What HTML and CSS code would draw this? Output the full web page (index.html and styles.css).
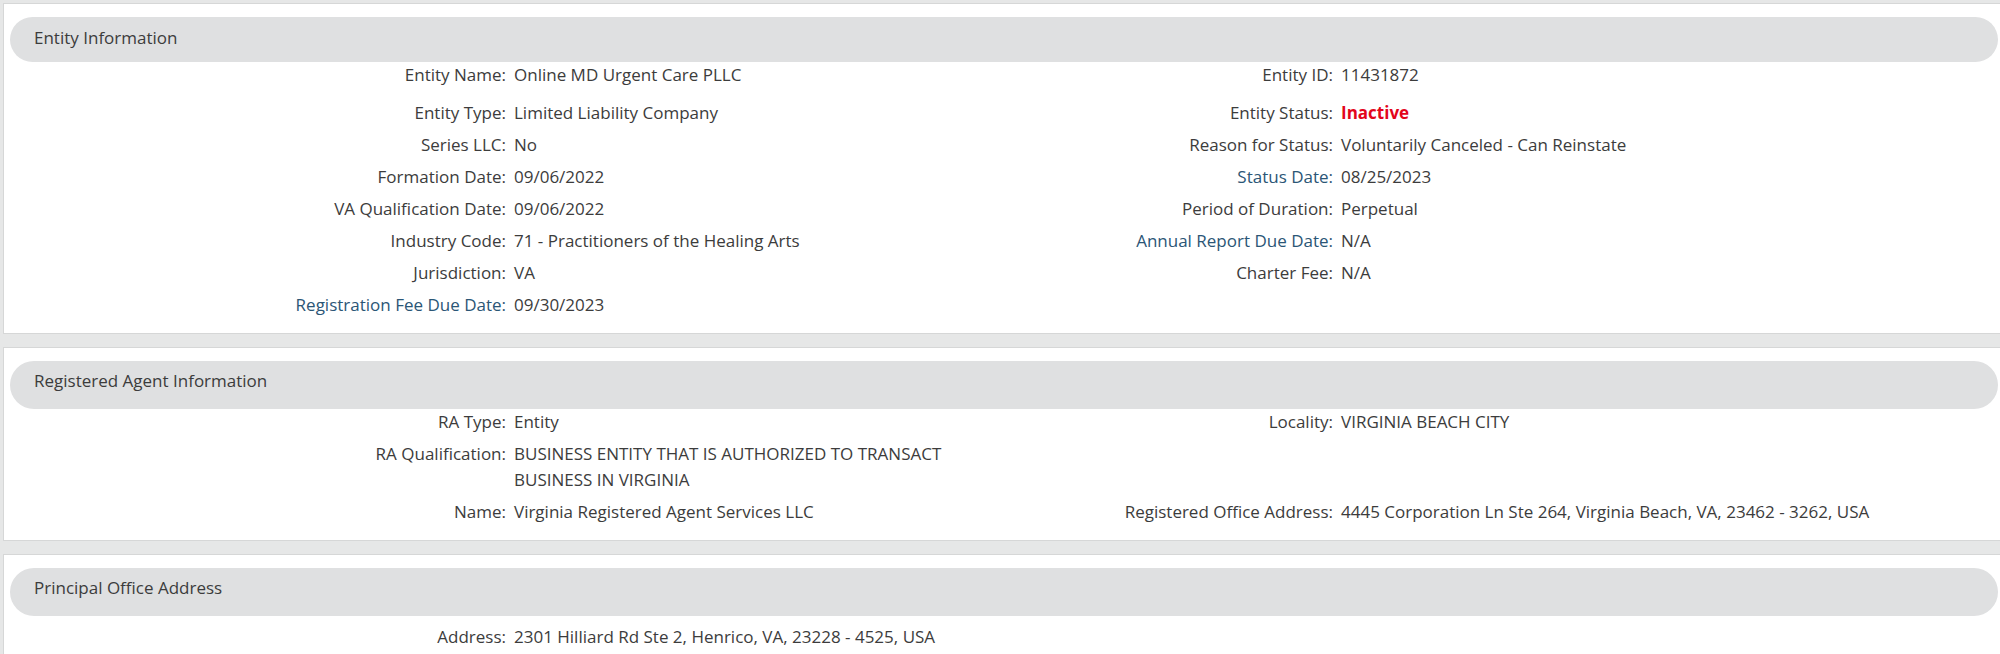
FILE: index.html
```html
<!DOCTYPE html>
<html lang="en">
<head>
  <meta charset="UTF-8">
  <title>Business Entity Details</title>
  <link rel="stylesheet" href="styles.css">
</head>
<body>
  <div class="page">

    <!-- entity info -->
    <div class="panel">
      <div class="panel-head panel-head-short">Entity Information</div>
      <div class="row row-tall">
        <span class="lbl">Entity Name:</span><span class="val">Online MD Urgent Care PLLC</span>
        <span class="lbl">Entity ID:</span><span class="val">11431872</span>
      </div>
      <div class="row">
        <span class="lbl">Entity Type:</span><span class="val">Limited Liability Company</span>
        <span class="lbl">Entity Status:</span><span class="val status-bad">Inactive</span>
      </div>
      <div class="row">
        <span class="lbl">Series LLC:</span><span class="val">No</span>
        <span class="lbl">Reason for Status:</span><span class="val">Voluntarily Canceled - Can Reinstate</span>
      </div>
      <div class="row">
        <span class="lbl">Formation Date:</span><span class="val">09/06/2022</span>
        <span class="lbl link">Status Date:</span><span class="val">08/25/2023</span>
      </div>
      <div class="row">
        <span class="lbl">VA Qualification Date:</span><span class="val">09/06/2022</span>
        <span class="lbl">Period of Duration:</span><span class="val">Perpetual</span>
      </div>
      <div class="row">
        <span class="lbl">Industry Code:</span><span class="val">71 - Practitioners of the Healing Arts</span>
        <span class="lbl link">Annual Report Due Date:</span><span class="val">N/A</span>
      </div>
      <div class="row">
        <span class="lbl">Jurisdiction:</span><span class="val">VA</span>
        <span class="lbl">Charter Fee:</span><span class="val">N/A</span>
      </div>
      <div class="row">
        <span class="lbl link">Registration Fee Due Date:</span><span class="val">09/30/2023</span>
        <span class="lbl"></span><span class="val"></span>
      </div>
    </div>

    <!-- registered agent -->
    <div class="panel">
      <div class="panel-head">Registered Agent Information</div>
      <div class="row">
        <span class="lbl">RA Type:</span><span class="val">Entity</span>
        <span class="lbl">Locality:</span><span class="val">VIRGINIA BEACH CITY</span>
      </div>
      <div class="row">
        <span class="lbl">RA Qualification:</span><span class="val">BUSINESS ENTITY THAT IS AUTHORIZED TO TRANSACT BUSINESS IN VIRGINIA</span>
        <span class="lbl"></span><span class="val"></span>
      </div>
      <div class="row">
        <span class="lbl">Name:</span><span class="val">Virginia Registered Agent Services LLC</span>
        <span class="lbl">Registered Office Address:</span><span class="val">4445 Corporation Ln Ste 264, Virginia Beach, VA, 23462 - 3262, USA</span>
      </div>
    </div>

    <!-- principal office -->
    <div class="panel panel-last">
      <div class="panel-head">Principal Office Address</div>
      <div class="row row-spaced">
        <span class="lbl">Address:</span><span class="val">2301 Hilliard Rd Ste 2, Henrico, VA, 23228 - 4525, USA</span>
        <span class="lbl"></span><span class="val"></span>
      </div>
    </div>

  </div>
</body>
</html>
```

FILE: styles.css
```css
html {
  overflow: hidden;
}

body {
  margin: 0;
  background-color: #e6e7e7;
  font-family: 'Open Sans', 'Noto Sans', sans-serif;
  font-size: 17px;
  color: #3c3c3c;
}

.page {
  padding: 3px 0 0 3px;
}

.panel {
  background-color: #ffffff;
  border: 1px solid #d6d7d7;
  margin-right: -12px;
  margin-bottom: 13px;
  padding: 13px 13px 9px 6px;
}

.panel-head {
  background-color: #dfe0e1;
  border-radius: 24px;
  height: 48px;
  line-height: 40px;
  padding-left: 24px;
  font-size: 17px;
  color: #3c3c3c;
}

.panel-head-short {
  height: 45px;
  line-height: 42px;
}

.row {
  display: grid;
  grid-template-columns: 496px 484px 343px 1fr;
  line-height: 26px;
  margin-bottom: 6px;
}

.row-tall {
  margin-bottom: 12px;
}

.row-spaced {
  margin-top: 8px;
}

.lbl {
  text-align: right;
}

.val {
  padding-left: 8px;
}

.link {
  color: #2b5676;
}

.status-bad {
  color: #e3051b;
  font-weight: bold;
}

.panel-last {
  padding-bottom: 60px;
}
```
